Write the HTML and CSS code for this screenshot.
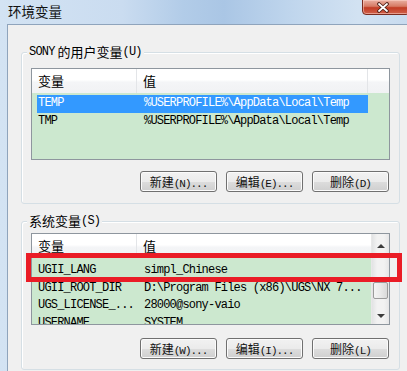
FILE: index.html
```html
<!DOCTYPE html>
<html lang="zh-CN">
<head>
    <meta charset="UTF-8">
    <title>环境变量</title>
    <link rel="stylesheet" href="styles.css">
</head>
<body>
    <div class="window">
        <div class="titlebar">
            <span class="title">环境变量</span>
            <div class="close">
                <svg width="12" height="11" viewBox="0 0 12 11">
                    <path d="M2 2 L10 9 M10 2 L2 9" stroke="#4b1d14" stroke-width="3.6" stroke-linecap="round"/>
                    <path d="M2 2 L10 9 M10 2 L2 9" stroke="#ffffff" stroke-width="1.8" stroke-linecap="round"/>
                </svg>
            </div>
        </div>
        <div class="client">
            <div class="group group-user">
                <div class="group-title"><span class="en">SONY</span> 的用户变量<span class="en">(U)</span></div>
                <div class="list">
                    <div class="list-main">
                        <div class="list-head">
                            <div class="h-name">变量</div>
                            <div class="h-value">值</div>
                            <div class="h-fill"></div>
                        </div>
                        <div class="list-body">
                            <div class="row selected"><span class="c-name en">TEMP</span><span class="c-value en">%USERPROFILE%\AppData\Local\Temp</span></div>
                            <div class="row"><span class="c-name en">TMP</span><span class="c-value en">%USERPROFILE%\AppData\Local\Temp</span></div>
                        </div>
                    </div>
                </div>
                <div class="buttons">
                    <button class="btn">新建<span class="en">(N)...</span></button>
                    <button class="btn">编辑<span class="en">(E)...</span></button>
                    <button class="btn">删除<span class="en">(D)</span></button>
                </div>
            </div>

            <div class="group group-system">
                <div class="group-title">系统变量<span class="en">(S)</span></div>
                <div class="list">
                    <div class="list-main">
                        <div class="list-head">
                            <div class="h-name">变量</div>
                            <div class="h-value">值</div>
                        </div>
                        <div class="list-body">
                            <div class="row"><span class="c-name en">UGII_LANG</span><span class="c-value en">simpl_Chinese</span></div>
                            <div class="row"><span class="c-name en">UGII_ROOT_DIR</span><span class="c-value en">D:\Program Files (x86)\UGS\NX 7...</span></div>
                            <div class="row"><span class="c-name en">UGS_LICENSE_...</span><span class="c-value en">28000@sony-vaio</span></div>
                            <div class="row"><span class="c-name en">USERNAME</span><span class="c-value en">SYSTEM</span></div>
                        </div>
                    </div>
                    <div class="scrollbar">
                        <div class="sb-btn"><span class="arrow-up"></span></div>
                        <div class="sb-track"><div class="sb-thumb"></div></div>
                        <div class="sb-btn"><span class="arrow-down"></span></div>
                    </div>
                </div>
                <div class="buttons">
                    <button class="btn">新建<span class="en">(W)...</span></button>
                    <button class="btn">编辑<span class="en">(I)...</span></button>
                    <button class="btn">删除<span class="en">(L)</span></button>
                </div>
            </div>
        </div>
        <div class="highlight"></div>
    </div>
</body>
</html>
```

FILE: styles.css
```css
* {
    box-sizing: border-box;
}
body {
    margin: 0;
    background-color: #f0f0f0;
    font-family: "Noto Sans CJK SC", sans-serif;
    color: #000;
}
.en {
    font-family: "Liberation Mono", "Noto Sans CJK SC", monospace;
    font-size: 12px;
    letter-spacing: -0.8px;
}
.window {
    position: relative;
    width: 407px;
    height: 371px;
    overflow: hidden;
    background: linear-gradient(90deg, #d3e3f3 0%, #cadcf0 30%, #b2cce8 45%, #aac6e5 55%, #c0d6ed 72%, #d2e2f2 88%, #c8dbef 100%);
}
.titlebar {
    display: flex;
    align-items: flex-start;
    height: 24px;
}
.title {
    margin: 3px 0 0 8px;
    font-size: 13.5px;
    line-height: 16px;
    color: #111;
}
.close {
    display: flex;
    align-items: center;
    justify-content: center;
    margin-left: auto;
    margin-right: -3px;
    width: 48px;
    height: 16px;
    margin-top: -1px;
    border: 1px solid #7a2c20;
    border-radius: 0 0 4px 4px;
    background: linear-gradient(#eab0a2 0%, #d67a64 45%, #c23c24 55%, #d0604a 100%);
    box-shadow: inset 0 0 0 1px rgba(255, 220, 210, 0.5);
    padding-right: 6px;
}
.client {
    margin-left: 7px;
    width: 420px;
    height: 347px;
    padding-left: 13px;
    padding-top: 27px;
    background-color: #f0f0f0;
    border-top: 1px solid #8fa4bc;
    border-left: 1px solid #8fa4bc;
}
.group {
    width: 379px;
    padding: 0 9px 11px;
    border: 1px solid #d5dfe5;
    border-radius: 3px;
    box-shadow: inset 1px 1px 0 #fff;
}
.group-system {
    margin-top: 17px;
    padding-bottom: 10px;
}
.group-title {
    width: fit-content;
    height: 14px;
    margin: -8px 0 0 -4px;
    padding: 0 2px;
    font-size: 13px;
    line-height: 14px;
    white-space: nowrap;
    background-color: #f0f0f0;
}
.group-title .en {
    vertical-align: top;
}
.list {
    display: flex;
    height: 92px;
    margin-top: 9px;
    border: 1px solid #8e969e;
    background-color: #cce8cf;
    overflow: hidden;
}
.group-system .list {
    margin-top: 5px;
}
.list-main {
    flex: 1;
    overflow: hidden;
}
.list-head {
    display: flex;
    height: 24px;
    background: linear-gradient(#ffffff 0%, #ffffff 45%, #f4f5f7 55%, #f1f2f4 100%);
    font-size: 13px;
    line-height: 24px;
}
.h-name {
    width: 105px;
    padding-left: 6px;
    border-right: 1px solid #e3e5e8;
}
.h-value {
    width: 231px;
    padding-left: 6px;
    border-right: 1px solid #e3e5e8;
}
.group-system .h-value {
    flex: 1;
    border-right: none;
}
.h-fill {
    flex: 1;
}
.list-body {
    padding-top: 2px;
}
.group-system .list-body {
    padding-top: 4px;
}
.row {
    display: flex;
    width: 331px;
    height: 17.5px;
    margin-left: 5px;
    line-height: 17.5px;
    white-space: nowrap;
}
.row.selected {
    background-color: #3399ff;
    color: #fff;
}
.c-name {
    width: 100px;
    padding-left: 1px;
}
.c-value {
    padding-left: 7px;
}
.scrollbar {
    display: flex;
    flex-direction: column;
    width: 18px;
    background: linear-gradient(90deg, #e2e3e4 0%, #f2f2f2 30%, #f2f2f2 70%, #e6e6e7 100%);
    border-left: 1px solid #e8e8e8;
}
.sb-btn {
    display: flex;
    align-items: center;
    justify-content: center;
    height: 17px;
}
.arrow-up {
    width: 0;
    height: 0;
    margin-top: 6px;
    border-left: 4px solid transparent;
    border-right: 4px solid transparent;
    border-bottom: 4px solid #3c3c3c;
}
.arrow-down {
    width: 0;
    height: 0;
    border-left: 4px solid transparent;
    border-right: 4px solid transparent;
    border-top: 4px solid #3c3c3c;
}
.sb-track {
    flex: 1;
}
.sb-thumb {
    height: 17px;
    margin: 31px 0 0 1px;
    width: 15px;
    border: 1px solid #9b9b9b;
    border-radius: 2px;
    background: linear-gradient(90deg, #f4f4f4 0%, #e9e9e9 50%, #d9d9d9 100%);
}
.buttons {
    display: flex;
    justify-content: flex-end;
    gap: 9px;
    width: 358px;
    margin-top: 11px;
}
.group-system .buttons {
    margin-top: 13px;
}
.btn {
    width: 77px;
    height: 21px;
    padding: 0;
    font-family: "Noto Sans CJK SC", sans-serif;
    font-size: 12px;
    line-height: 19px;
    color: #111;
    border: 1px solid #707070;
    border-radius: 3px;
    background: linear-gradient(#f2f2f2 0%, #ebebeb 50%, #dddddd 51%, #cfcfcf 100%);
    box-shadow: inset 0 0 0 1px #fbfbfb;
}
.btn .en {
    font-size: 11px;
    letter-spacing: -1px;
}
.highlight {
    position: absolute;
    left: 26px;
    top: 253px;
    width: 376px;
    height: 29px;
    border: 5px solid #ea1c26;
}
```
